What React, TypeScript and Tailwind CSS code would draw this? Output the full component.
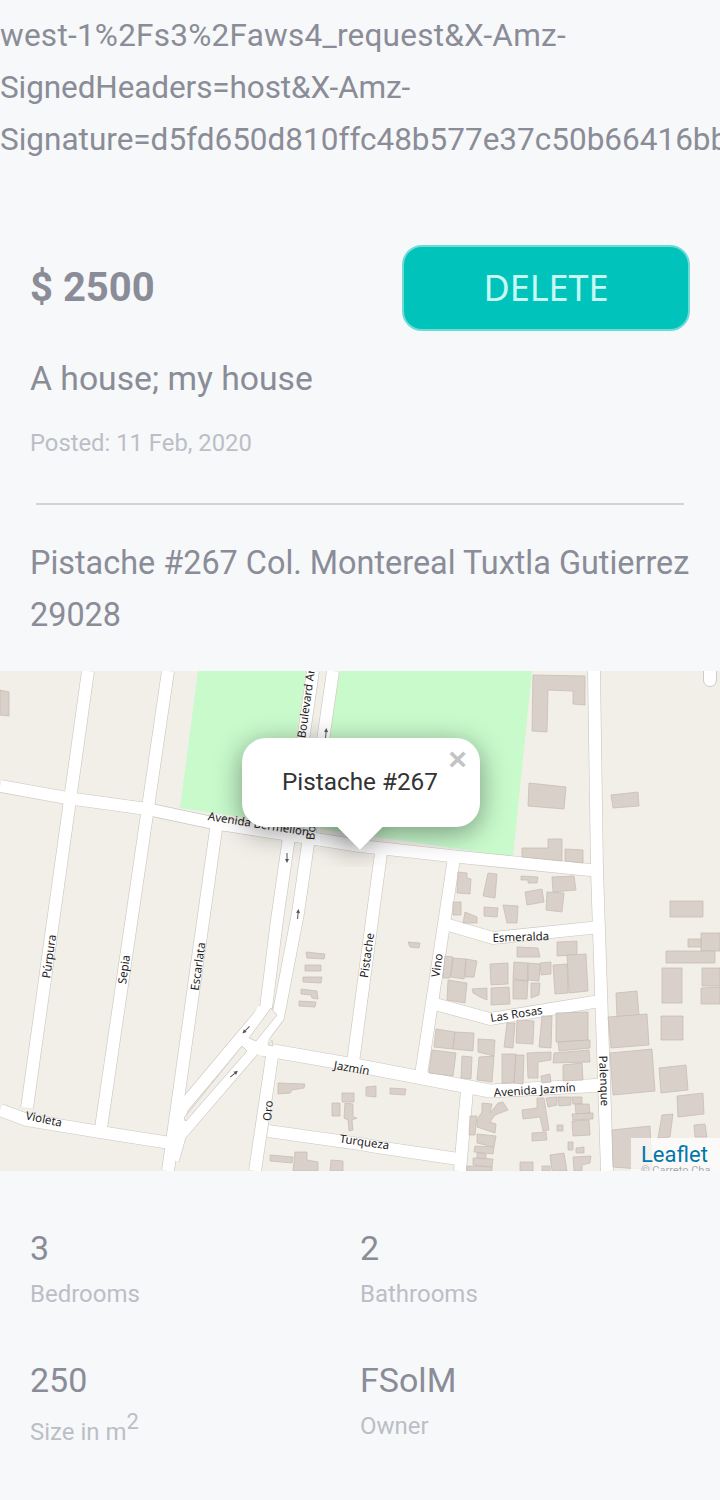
const land = "#f2efe9";
const roads: [string, number][] = [
  ["88,671 27,1108", 12],
  ["168,671 101,1128", 12],
  ["218,815 173,1135 168,1171", 12],
  ["313,671 277,920 266,1008 182,1108 173,1135", 12],
  ["333,671 298,913 278,1017 254,1049 180,1135 173,1160", 12],
  ["273,1050 255,1171", 12],
  ["0,786 67,798 147,809 213,823 360,846 460,857 600,871", 12],
  ["0,1110 27,1120 100,1132 170,1143", 12],
  ["262,1049 360,1066 490,1091 605,1085", 13],
  ["268,1131 360,1144 377,1147 465,1160", 12],
  ["381,853 352,1070", 12],
  ["454,858 421,1075", 12],
  ["467,1090 460,1171", 12],
  ["445,924 493,938 600,927", 12],
  ["435,1004 490,1019 600,1001", 12],
  ["594,671 597,870 607,1171", 12],
];
const buildings = [
  "0,690 9,692 9,716 0,715",
  "533,675 585,676 585,705 573,704 573,691 548,690 547,732 532,731",
  "529,783 566,787 564,809 528,806",
  "611,795 638,792 639,806 613,808",
  "522,848 548,848 548,839 562,839 562,861 522,857",
  "565,849 583,850 583,863 565,861",
  "670,901 703,901 703,917 670,917",
  "458,872 467,873 467,878 471,879 470,894 457,893",
  "488,873 497,874 495,898 483,896",
  "521,876 538,877 537,883 528,883 528,880 521,880",
  "552,877 574,876 576,890 553,892",
  "525,892 542,889 544,902 527,905",
  "547,892 564,893 562,912 546,910",
  "453,902 461,902 461,915 453,915",
  "484,907 498,908 497,917 484,916",
  "503,905 518,906 517,923 507,923",
  "465,912 477,917 477,923 463,923",
  "306,952 325,954 324,959 307,958",
  "305,965 321,965 321,971 305,971",
  "303,977 322,977 321,983 303,982",
  "301,989 317,991 318,999 312,998 311,995 301,994",
  "299,1001 316,1002 315,1007 299,1006",
  "278,1083 305,1084 304,1088 292,1090 290,1093 278,1094",
  "342,1093 354,1093 354,1102 342,1102",
  "345,1103 353,1104 353,1117 357,1118 352,1120 353,1130 349,1131 348,1120 344,1118",
  "332,1103 340,1103 340,1116 332,1116",
  "270,1155 293,1157 292,1163 270,1161",
  "295,1152 307,1152 307,1160 318,1162 318,1171 293,1171",
  "331,1160 343,1161 343,1171 330,1171",
  "408,942 420,943 419,948 410,947",
  "517,947 538,948 540,957 517,957",
  "557,942 577,941 577,955 557,956",
  "445,956 453,957 450,978 443,978",
  "453,958 466,959 464,979 451,977",
  "466,959 477,961 474,977 465,977",
  "448,980 467,983 465,1003 447,1000",
  "472,989 487,988 487,1000 480,997 473,993",
  "490,964 508,963 508,984 491,985",
  "491,988 509,987 510,1004 491,1005",
  "514,962 528,963 528,981 513,979",
  "528,963 540,964 539,981 528,980",
  "540,963 551,962 551,974 541,975",
  "513,980 528,981 527,999 513,999",
  "531,983 540,983 539,995 531,998",
  "553,965 567,964 568,993 555,994",
  "567,955 586,954 588,991 569,993",
  "436,1029 455,1032 453,1049 434,1047",
  "455,1032 474,1033 473,1051 453,1049",
  "432,1050 456,1053 453,1076 429,1073",
  "478,1039 495,1040 494,1056 478,1052",
  "462,1056 472,1057 471,1079 461,1078",
  "479,1057 494,1056 492,1082 477,1080",
  "507,1023 515,1023 513,1048 504,1047",
  "517,1020 534,1021 533,1044 516,1043",
  "542,1016 552,1016 551,1048 539,1047",
  "556,1013 588,1012 588,1040 556,1042",
  "558,1042 590,1040 590,1048 559,1051",
  "554,1053 589,1050 590,1062 553,1063",
  "527,1053 551,1052 551,1060 538,1062 538,1078 528,1078",
  "502,1054 516,1054 514,1083 502,1083",
  "516,1055 524,1055 523,1084 514,1083",
  "563,1065 582,1063 583,1080 563,1081",
  "541,1076 550,1074 551,1082 542,1083",
  "701,933 720,933 720,951 701,951",
  "688,939 701,939 701,947 688,947",
  "666,951 715,951 715,963 666,963",
  "662,968 682,968 682,1003 662,1003",
  "702,968 720,968 720,986 702,986",
  "701,988 720,987 720,1004 701,1004",
  "616,993 637,991 639,1015 617,1017",
  "608,1017 647,1014 649,1045 611,1048",
  "610,1053 652,1049 655,1091 613,1095",
  "661,1016 683,1016 683,1040 661,1040",
  "659,1068 686,1065 688,1090 661,1093",
  "677,1096 703,1093 704,1114 678,1117",
  "612,1130 650,1126 652,1170 613,1167",
  "662,1115 673,1114 670,1137 658,1138",
  "694,1125 705,1124 707,1137 695,1137",
  "366,1087 376,1086 376,1097 366,1096",
  "390,1088 406,1089 405,1095 390,1094",
  "470,1116 477,1116 475,1135 469,1135",
  "482,1103 492,1104 490,1113 498,1103 503,1102 508,1110 495,1115 490,1122 496,1124 495,1133 477,1127 478,1118 482,1112",
  "477,1134 496,1136 494,1147 477,1143",
  "475,1146 494,1147 493,1154 474,1152",
  "477,1153 486,1154 486,1159 477,1158",
  "473,1158 493,1159 492,1167 473,1165",
  "467,1166 492,1167 492,1171 467,1171",
  "522,1110 537,1108 537,1098 544,1098 549,1130 543,1131 540,1117 523,1119",
  "546,1098 557,1097 557,1105 548,1107",
  "558,1097 571,1097 571,1105 559,1106",
  "572,1097 582,1097 582,1104 573,1104",
  "575,1104 589,1104 590,1113 576,1114",
  "572,1114 593,1113 593,1119 573,1120",
  "572,1121 589,1120 590,1135 573,1136",
  "557,1125 563,1125 563,1131 557,1131",
  "532,1133 546,1132 547,1140 532,1141",
  "568,1142 573,1142 573,1150 568,1150",
  "576,1148 584,1147 584,1153 576,1153",
  "550,1155 564,1153 567,1171 552,1171",
  "573,1157 591,1156 590,1163 582,1165 582,1171 574,1171",
  "520,1162 533,1162 533,1171 520,1171",
  "542,1166 550,1166 550,1171 542,1171",
];
const labels: [string, number, number, number][] = [
  ["Avenida Bermellon", 258, 828, 9],
  ["Boulevard Ar", 310, 704, -82],
  ["Bo", 315, 833, -85],
  ["Púrpura", 53, 957, -82],
  ["Sepia", 128, 970, -82],
  ["Escarlata", 202, 967, -82],
  ["Oro", 272, 1111, -85],
  ["Pistache", 371, 956, -82],
  ["Vino", 441, 966, -82],
  ["Esmeralda", 521, 941, -2],
  ["Las Rosas", 517, 1018, -9],
  ["Jazmín", 351, 1072, 10],
  ["Avenida Jazmín", 535, 1094, -4],
  ["Palenque", 600, 1081, 88],
  ["Violeta", 43, 1123, 12],
  ["Turqueza", 364, 1146, 8],
];
const arrows: [number, number, number][] = [
  [287, 858, 180],
  [298, 914, 5],
  [326, 733, 5],
  [246, 1030, 225],
  [234, 1074, 50],
];
const medians = [
  "184,1118 242,1046 247,1051 186,1121",
  "249,1038 271,1008 277,1015 256,1041",
  "268,1045 272,1040 273,1046",
];

function MapArt() {
  return (
    <svg viewBox="0 671 720 500" width="720" height="500" className="block">
      <rect x="0" y="671" width="720" height="500" fill={land} />
      <polygon points="198,671 532,671 513,857 180,808" fill="#c8facc" />
      <polygon points="306,671 340,671 308,860 278,860" fill={land} />
      {roads.map(([p, w], i) => (
        <polyline key={i} points={p} fill="none" stroke="#cbc7c1" strokeWidth={w + 1.2} strokeLinejoin="round" />
      ))}
      {roads.map(([p, w], i) => (
        <polyline key={i} points={p} fill="none" stroke="#ffffff" strokeWidth={w} strokeLinejoin="round" />
      ))}
      <polygon points="238,1046 258,1006 280,1012 262,1056" fill="#ffffff" />
      {medians.map((p) => (
        <polygon key={p} points={p} fill={land} stroke="#cbc7c1" strokeWidth="0.75" />
      ))}
      {buildings.map((p) => (
        <polygon key={p} points={p} fill="#d9d0c9" stroke="#c6bbb2" strokeWidth="0.75" />
      ))}
      {arrows.map(([x, y, r], i) => (
        <g key={i} transform={`translate(${x} ${y}) rotate(${r})`} stroke="#555555" fill="#555555">
          <line x1="0" y1="-1" x2="0" y2="5" strokeWidth="1" />
          <polygon points="0,-5 -2,-1 2,-1" stroke="none" />
        </g>
      ))}
      {labels.map(([t, x, y, r]) => (
        <text
          key={t}
          x={x}
          y={y}
          transform={`rotate(${r} ${x} ${y})`}
          fontSize="11.5"
          textAnchor="middle"
          fill="#222222"
          fontFamily="'Noto Sans', sans-serif"
        >
          {t}
        </text>
      ))}
    </svg>
  );
}

function Stat({ value, label, labelClass }: { value: string; label: React.ReactNode; labelClass: string }) {
  return (
    <div className="min-w-0">
      <div className="text-[34px] leading-[52px] text-[#8a8c97]">{value}</div>
      <div className={labelClass}>{label}</div>
    </div>
  );
}

export default function App() {
  return (
    <div className="w-[720px] h-[1500px] overflow-hidden bg-[#f7f8fa] font-['Roboto',sans-serif]">
      <div className="pt-[10px] text-[31.5px] leading-[52px] text-[#8a8c97] whitespace-nowrap">
        <div className="tracking-[0.25px]">west-1%2Fs3%2Faws4_request&amp;X-Amz-</div>
        <div className="tracking-[-0.1px]">SignedHeaders=host&amp;X-Amz-</div>
        <div>Signature=d5fd650d810ffc48b577e37c50b66416bb</div>
      </div>

      <div className="mt-[79px] px-[30px] flex items-center justify-between">
        <div className="text-[40px] font-bold text-[#8a8c97]">$ 2500</div>
        <button className="w-[288px] h-[86px] rounded-[20px] border-2 border-[#6ddcd6] bg-[#00c4bc] text-[#c8f8f4] text-[36px] font-['Noto_Sans',sans-serif]">
          DELETE
        </button>
      </div>

      <div className="mt-[22px] px-[30px] text-[33.7px] leading-[52px] text-[#8a8c97]">A house; my house</div>
      <div className="mt-[20px] px-[30px] text-[23.8px] leading-[36px] text-[#bcbec6]">Posted: 11 Feb, 2020</div>

      <div className="mt-[42px] mx-[36px] h-[2px] bg-[#d3d4d6]" />

      <div className="mt-[32px] px-[30px] text-[32.4px] leading-[52px] text-[#8a8c97] whitespace-nowrap">
        <div>Pistache #267 Col. Montereal Tuxtla Gutierrez</div>
        <div>29028</div>
      </div>

      <div className="relative mt-[30px] h-[500px] w-[720px] overflow-hidden">
        <MapArt />
        <div className="absolute right-[3px] top-[-12px] h-[28px] w-[14px] rounded-full bg-white border border-[#cccccc]" />
        <div className="absolute left-[242px] top-[67px] flex h-[89px] w-[238px] items-center justify-center rounded-[24px] bg-white pr-[2px] text-[24.3px] text-[#333333] shadow-[0_6px_28px_rgba(0,0,0,0.4)]">
          Pistache #267
          <span className="absolute right-[13px] top-[3px] font-['Liberation_Sans',sans-serif] text-[32px] leading-[36px] font-bold text-[#c3c3c3]">×</span>
        </div>
        <div className="absolute left-[320px] top-[156px] h-[40px] w-[80px] overflow-hidden">
          <div className="mx-auto mt-[-16px] h-[32px] w-[32px] rotate-45 bg-white shadow-[0_6px_28px_rgba(0,0,0,0.4)]" />
        </div>
        <div className="absolute bottom-0 right-0 h-[33px] w-[89px] overflow-hidden bg-white/70 pl-[10px] text-[22px] leading-[33px] text-[#0078a8]">
          Leaflet
          <div className="text-[11px] leading-[12px] text-[#aaaaaa] mt-[-6px] whitespace-nowrap">© Carreto Cha</div>
        </div>
      </div>

      <div className="mt-[51px] grid grid-cols-2 px-[30px] gap-y-[42px]">
        <Stat value="3" label="Bedrooms" labelClass="mt-[2px] text-[24px] leading-[36px] text-[#bcbec6]" />
        <Stat value="2" label="Bathrooms" labelClass="mt-[2px] text-[24px] leading-[36px] text-[#bcbec6]" />
        <Stat
          value="250"
          label={<>Size in m<sup className="text-[22px]">2</sup></>}
          labelClass="mt-[8px] text-[24px] leading-[36px] text-[#bcbec6]"
        />
        <Stat value="FSolM" label="Owner" labelClass="mt-[2px] text-[24px] leading-[36px] text-[#bcbec6]" />
      </div>
    </div>
  );
}
